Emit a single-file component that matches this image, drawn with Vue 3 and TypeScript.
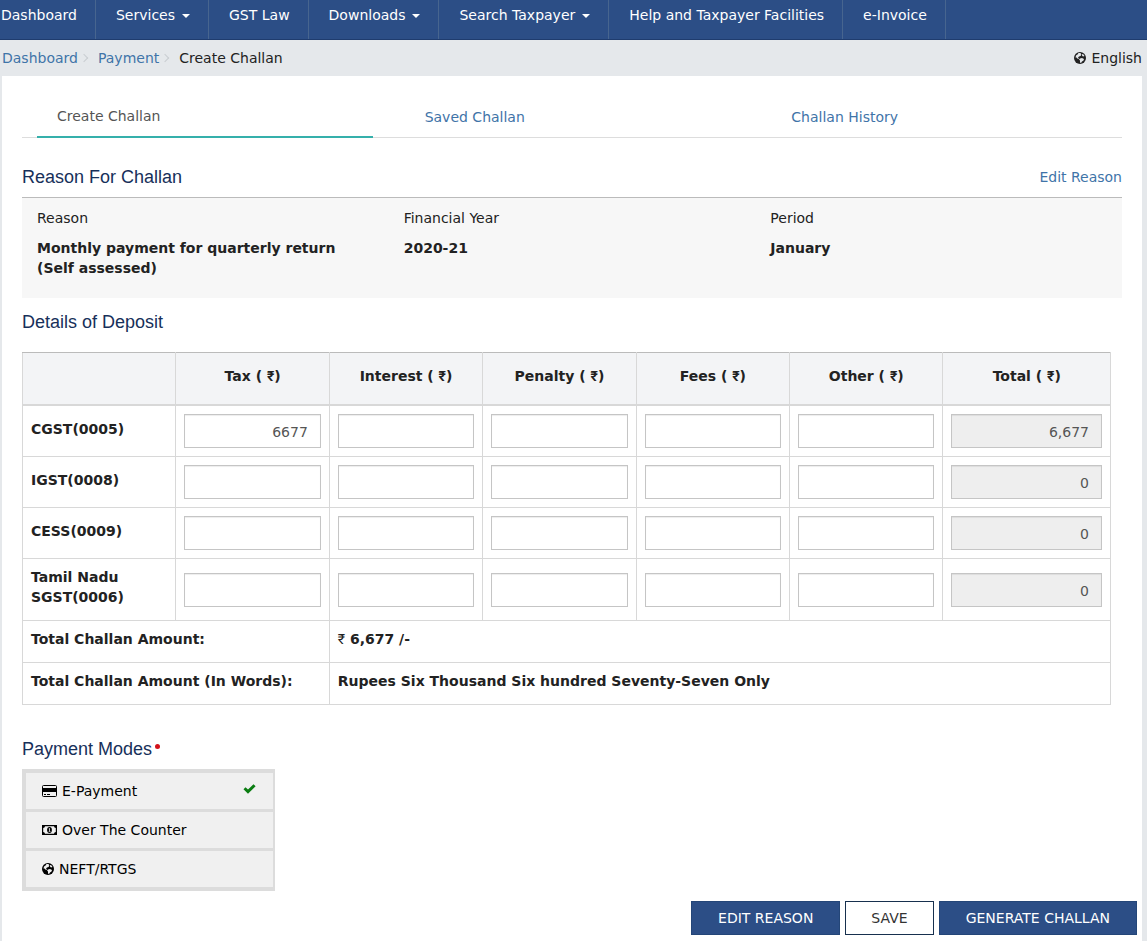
<script setup lang="ts">
import { computed, reactive, ref } from 'vue'

interface NavItem {
  label: string
  menu?: boolean
}

interface DepositRow {
  label: string
  values: string[]
}

const navItems: NavItem[] = [
  { label: 'Dashboard' },
  { label: 'Services', menu: true },
  { label: 'GST Law' },
  { label: 'Downloads', menu: true },
  { label: 'Search Taxpayer', menu: true },
  { label: 'Help and Taxpayer Facilities' },
  { label: 'e-Invoice' },
]

const tabs = ['Create Challan', 'Saved Challan', 'Challan History']

const reasonFields = [
  { label: 'Reason', value: 'Monthly payment for quarterly return (Self assessed)' },
  { label: 'Financial Year', value: '2020-21' },
  { label: 'Period', value: 'January' },
]

const heads = ['Tax', 'Interest', 'Penalty', 'Fees', 'Other']

const rows = reactive<DepositRow[]>([
  { label: 'CGST(0005)', values: ['6677', '', '', '', ''] },
  { label: 'IGST(0008)', values: ['', '', '', '', ''] },
  { label: 'CESS(0009)', values: ['', '', '', '', ''] },
  { label: 'Tamil Nadu SGST(0006)', values: ['', '', '', '', ''] },
])

const sum = (row: DepositRow): number => row.values.reduce((t, v) => t + (Number(v) || 0), 0)
const format = (n: number): string => n.toLocaleString('en-IN')
const total = computed(() => format(rows.reduce((t, r) => t + sum(r), 0)))

const modes = [
  { id: 'card', label: 'E-Payment' },
  { id: 'cash', label: 'Over The Counter' },
  { id: 'globe', label: 'NEFT/RTGS' },
]
const mode = ref('card')

// Light land masses drawn over the dark disc of the globe icon.
const land =
  'M9 2L14 2L13 4L15 5L13 8L10 9L8 11L10 13L8 14L5 11L3 11L4 7L7 5Z' +
  'M16 4L19 5L21 8L18 9L16 7Z' +
  'M12 13L16 12L20 14L19 17L16 19L14 22L12 21L12 17L10 15Z'
</script>

<template>
  <div class="page">
    <nav class="nav">
      <a v-for="item in navItems" :key="item.label" href="#" class="nav-item">
        {{ item.label }}<span v-if="item.menu" class="caret"></span>
      </a>
    </nav>

    <div class="crumb-bar">
      <ol class="crumbs">
        <li><a href="#">Dashboard</a></li>
        <li><a href="#">Payment</a></li>
        <li>Create Challan</li>
      </ol>
      <button type="button" class="language">
        <svg class="globe" viewBox="0 0 24 24" aria-hidden="true">
          <circle cx="12" cy="12" r="12" fill="#222" />
          <path class="land" :d="land" />
        </svg>
        English
      </button>
    </div>

    <main class="content">
      <ul class="tabs">
        <li v-for="(tab, i) in tabs" :key="tab">
          <a href="#" :class="{ active: i === 0 }">{{ tab }}</a>
        </li>
      </ul>

      <header class="reason-head">
        <h4>Reason For Challan</h4>
        <a href="#">Edit Reason</a>
      </header>
      <dl class="reason">
        <div v-for="field in reasonFields" :key="field.label">
          <dt>{{ field.label }}</dt>
          <dd>{{ field.value }}</dd>
        </div>
      </dl>

      <h4 class="deposit-title">Details of Deposit</h4>
      <table class="deposit">
        <colgroup>
          <col v-for="n in 6" :key="n" class="col" />
          <col />
        </colgroup>
        <thead>
          <tr>
            <td></td>
            <th v-for="head in heads" :key="head" scope="col">{{ head }} ( <span class="rupee">₹</span>)</th>
            <th scope="col">Total ( <span class="rupee">₹</span>)</th>
          </tr>
        </thead>
        <tbody>
          <tr v-for="row in rows" :key="row.label">
            <th scope="row">{{ row.label }}</th>
            <td v-for="(head, i) in heads" :key="head">
              <input v-model="row.values[i]" type="text" :aria-label="`${row.label} ${head}`" />
            </td>
            <td>
              <input type="text" disabled :value="format(sum(row))" :aria-label="`${row.label} total`" />
            </td>
          </tr>
          <tr>
            <th scope="row" colspan="2">Total Challan Amount:</th>
            <td colspan="5" class="amount"><span class="rupee plain">₹</span> {{ total }} /-</td>
          </tr>
          <tr>
            <th scope="row" colspan="2">Total Challan Amount (In Words):</th>
            <td colspan="5" class="amount">Rupees Six Thousand Six hundred Seventy-Seven Only</td>
          </tr>
        </tbody>
      </table>

      <fieldset class="modes">
        <legend>Payment Modes<span class="required"></span></legend>
        <div class="mode-list">
          <label v-for="m in modes" :key="m.id" class="mode">
            <input v-model="mode" type="radio" name="mode" :value="m.id" />
            <svg v-if="m.id === 'card'" class="wide" viewBox="0 0 15 12" aria-hidden="true">
              <rect x="0.5" y="0.5" width="14" height="11" rx="1" fill="none" stroke="#000" />
              <path d="M0 3h15v4H0zM2 9h2v1H2zM5 9h3v1H5z" />
            </svg>
            <svg v-else-if="m.id === 'cash'" class="wide" viewBox="0 0 15 12" aria-hidden="true">
              <path
                fill-rule="evenodd"
                d="M0 1h15v10H0zM3 2.2a2 2 0 0 1-1.8 1.8v4a2 2 0 0 1 1.8 1.8h9a2 2 0 0 1 1.8-1.8v-4a2 2 0 0 1-1.8-1.8z"
              />
              <ellipse cx="7.5" cy="6" rx="2.4" ry="3" />
              <path d="M6.7 4.8l.7-.6h.6v3h.6v.6H6.6v-.6h.6V5.1l-.5.2z" fill="#f0f0f0" />
            </svg>
            <svg v-else class="globe" viewBox="0 0 24 24" aria-hidden="true">
              <circle cx="12" cy="12" r="12" />
              <path class="land" :d="land" />
            </svg>
            <span>{{ m.label }}</span>
            <svg v-if="mode === m.id" class="check" viewBox="0 0 13 10" aria-hidden="true">
              <path d="M0.5 5.2L2.5 3.2L5 5.6L10.5 0.3L12.6 2.3L5 9.8Z" fill="#0b7d12" />
            </svg>
          </label>
        </div>
      </fieldset>

      <div class="actions">
        <button type="button" class="primary">EDIT REASON</button>
        <button type="button">SAVE</button>
        <button type="button" class="primary">GENERATE CHALLAN</button>
      </div>
    </main>
  </div>
</template>

<style>
body {
  background: #e5e8eb;
}
</style>

<style scoped>
.page {
  font: 14px/20px Verdana, "DejaVu Sans", sans-serif;
  color: #222;
}
.page *,
.page *::before {
  box-sizing: border-box;
}
a {
  color: #3f74a8;
  text-decoration: none;
}
button {
  font: inherit;
  cursor: pointer;
}
.nav {
  display: flex;
  background: #2c4e86;
  border-bottom: 1px solid #1f3c6e;
}
.nav-item {
  padding: 5px 18px 14px 20px;
  border-right: 1px solid #47658f;
  color: #fff;
  white-space: nowrap;
}
.nav-item:first-child {
  padding-left: 1px;
}
.caret {
  display: inline-block;
  margin-left: 7px;
  border: 4px solid transparent;
  border-top-color: #fff;
  border-bottom: 0;
  vertical-align: middle;
}
.crumb-bar {
  display: flex;
  justify-content: space-between;
  padding: 8px 5px 8px 2px;
}
.crumbs {
  display: flex;
  margin: 0;
  padding: 0;
  list-style: none;
}
.crumbs li + li::before {
  content: "";
  display: inline-block;
  width: 6px;
  height: 6px;
  margin: 0 11px 2px 3px;
  border: solid #c9cdd1;
  border-width: 1px 1px 0 0;
  transform: rotate(45deg);
}
.language {
  display: flex;
  align-items: center;
  gap: 5px;
  padding: 0;
  border: 0;
  background: none;
  color: #222;
}
.globe {
  width: 12px;
  height: 12px;
  flex: none;
}
.land {
  fill: #e5e8eb;
}
.content {
  margin: 0 5px 0 2px;
  padding: 20px 20px 6px;
  background: #fff;
}
.tabs {
  display: grid;
  grid-template-columns: repeat(3, 1fr);
  margin: 0;
  padding: 0;
  list-style: none;
  border-bottom: 1px solid #ddd;
}
.tabs li {
  padding: 0 16px 0 15px;
}
.tabs a {
  display: block;
  padding: 11px 21px 10px;
}
.tabs a.active {
  margin-bottom: -1px;
  padding: 10px 20px;
  border-bottom: 2px solid #35b0ab;
  color: #555;
}
h4,
legend {
  margin: 0;
  font: 18px/20px "Liberation Sans", Arial, sans-serif;
  color: #17305a;
}
.reason-head {
  display: flex;
  justify-content: space-between;
  padding: 29px 0 10px;
  border-bottom: 1px solid #bbb;
}
.reason {
  display: grid;
  grid-template-columns: repeat(3, 1fr);
  margin: 0;
  padding: 10px 0 20px;
  background: #f7f7f7;
}
.reason div {
  padding: 0 15px;
}
dd {
  margin: 10px 0 0;
  font-weight: bold;
}
.deposit-title {
  margin: 14px 0 20px;
}
.deposit {
  width: 99%;
  border-collapse: collapse;
  table-layout: fixed;
}
.col {
  width: 14.1%;
}
.deposit th,
.deposit td {
  padding: 8px;
  border: 1px solid #d8d8d8;
}
.deposit thead th,
.deposit thead td {
  padding: 13px 8px 18px;
  background: #f3f4f6;
  border-top-color: #bbb;
  border-bottom-width: 2px;
  text-align: center;
}
.deposit tbody th {
  padding: 8px 8px 13px;
  text-align: left;
}
.deposit td.amount {
  padding-bottom: 13px;
  font-weight: bold;
}
.rupee {
  font-family: Roboto, "Noto Sans", sans-serif;
}
.plain {
  font-weight: normal;
}
.deposit input {
  display: block;
  width: 100%;
  height: 34px;
  padding: 7px 12px 5px;
  border: 1px solid #c5c5c5;
  border-radius: 0;
  background: #fff;
  box-shadow: inset 0 1px 1px rgba(0, 0, 0, 0.075);
  color: #555;
  font: inherit;
  text-align: right;
}
.deposit input:disabled {
  background: #eee;
}
.modes {
  margin: 34px 0 0;
  padding: 0;
  border: 0;
}
legend {
  display: flex;
  gap: 3px;
  padding: 0 0 10px;
}
.required {
  width: 5px;
  height: 5px;
  margin-top: 5px;
  border-radius: 50%;
  background: #d3131b;
}
.mode-list {
  display: grid;
  gap: 3px;
  width: 253px;
  padding: 4px 2px 4px 4px;
  background: #dcdcdc;
}
.mode {
  display: flex;
  align-items: center;
  gap: 5px;
  padding: 8px 17px 8px 16px;
  background: #f0f0f0;
  color: #000;
}
.mode input {
  position: absolute;
  opacity: 0;
  margin: 0;
}
.wide {
  width: 15px;
  height: 12px;
}
.mode .land {
  fill: #f0f0f0;
}
.check {
  width: 13px;
  height: 10px;
  margin: 0 0 4px auto;
}
.actions {
  display: flex;
  justify-content: flex-end;
  gap: 5px;
  margin: 10px -15px 0 0;
}
.actions button {
  padding: 6px 25px;
  border: 1px solid #17304e;
  background: #fff;
  color: #333;
}
.actions .primary {
  padding: 6px 26px;
  border-color: #244678;
  background: #2c4e86;
  color: #fff;
}
</style>
